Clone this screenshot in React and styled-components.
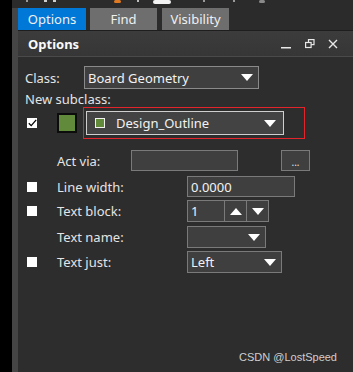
import React from "react";
import styled, { createGlobalStyle } from "styled-components";

const GlobalStyle = createGlobalStyle`
  html, body {
    margin: 0;
    padding: 0;
    background: #2d2d2d;
  }
  body {
    font-family: "Noto Sans", "Open Sans", sans-serif;
    font-size: 13px;
    color: #e6e6e6;
  }
`;

const Screen = styled.div`
  position: relative;
  display: flex;
  width: 353px;
  height: 372px;
  overflow: hidden;
`;

const LeftRail = styled.div`
  width: 12px;
  background: #000;
`;

const Main = styled.div`
  flex: 1;
  display: flex;
  flex-direction: column;
`;

const TopStrip = styled.div`
  height: 8px;
  background: #2b2b2b;
  display: flex;
  align-items: flex-start;
  gap: 6px;
  padding-left: 14px;
  overflow: hidden;
`;

const Blip = styled.span`
  display: block;
  margin-left: ${(p) => p.$ml || 0}px;
  width: ${(p) => p.$w}px;
  height: ${(p) => p.$h || 3}px;
  background: ${(p) => p.$c};
  border-radius: ${(p) => p.$r || 0}px;
`;

const Body = styled.div`
  flex: 1;
  display: flex;
`;

const Gutter = styled.div`
  width: 6px;
  background: #454545;
`;

const Panel = styled.div`
  flex: 1;
  display: flex;
  flex-direction: column;
  background: #2d2d2d;
`;

const TabBar = styled.div`
  display: flex;
  height: 22px;
  background: #2b2b2b;
  border-bottom: 1px solid #1e1e1e;
`;

const Tab = styled.div`
  width: ${(p) => p.$w}px;
  margin-right: ${(p) => p.$mr || 0}px;
  display: flex;
  align-items: center;
  justify-content: center;
  background: ${(p) => (p.$active ? "#0078d7" : "#6e6e6e")};
  color: #f0f0f0;
  font-size: 13px;
`;

const Header = styled.div`
  height: 25px;
  display: flex;
  align-items: center;
  padding: 0 15px 0 10px;
  background: linear-gradient(#3c3c3c, #363636);
  border-bottom: 1px solid #4a4a4a;
`;

const HeaderTitle = styled.div`
  flex: 1;
  font-weight: 700;
  font-size: 13px;
  color: #fafafa;
`;

const HeaderIcons = styled.div`
  display: flex;
  align-items: center;
  gap: 13px;
`;

const Form = styled.div`
  display: flex;
  flex-direction: column;
  padding: 9px 0 0 9px;
`;

const Row = styled.div`
  display: flex;
  align-items: center;
  height: ${(p) => p.$h}px;
  margin-top: ${(p) => p.$mt || 0}px;
`;

const CheckCell = styled.div`
  width: 30px;
  display: flex;
  align-items: center;
`;

const Check = styled.div`
  width: 10px;
  height: 10px;
  background: #fff;
  display: flex;
  align-items: center;
  justify-content: center;
`;

const Label = styled.div`
  width: ${(p) => p.$w}px;
  margin-left: ${(p) => p.$ml || 0}px;
  color: #e4e4e4;
  white-space: nowrap;
`;

const Field = styled.div`
  box-sizing: border-box;
  width: ${(p) => p.$w}px;
  height: ${(p) => p.$h || 22}px;
  display: flex;
  align-items: center;
  padding-left: 3px;
  background: ${(p) => p.$bg || "#3f3f3f"};
  border: 1px solid ${(p) => p.$border || "#7a7a7a"};
  color: #f2f2f2;
`;

const FieldText = styled.span`
  flex: 1;
  white-space: nowrap;
`;

const Arrow = styled.span`
  width: 0;
  height: 0;
  margin-right: ${(p) => p.$mr ?? 5}px;
  border-left: 6px solid transparent;
  border-right: 6px solid transparent;
  border-${(p) => (p.$up ? "bottom" : "top")}: 7px solid #fff;
`;

const SpinBtn = styled.div`
  width: 21px;
  align-self: stretch;
  display: flex;
  align-items: center;
  justify-content: center;
  border-left: 1px solid #7a7a7a;
`;

const Swatch = styled.div`
  box-sizing: border-box;
  width: 20px;
  height: 20px;
  background: #618a3b;
  border: 2px solid #0c0c0c;
`;

const Highlight = styled.div`
  box-sizing: border-box;
  width: 222px;
  height: 32px;
  margin-left: 6px;
  padding: 3px 0 0 2px;
  border: 1px solid #e3242b;
`;

const MiniSwatch = styled.span`
  box-sizing: border-box;
  width: 10px;
  height: 10px;
  margin: 0 11px 0 5px;
  background: #618a3b;
  border: 1px solid #f0f0f0;
`;

const DotsBtn = styled.div`
  box-sizing: border-box;
  width: 29px;
  height: 21px;
  margin-left: 43px;
  display: flex;
  align-items: flex-end;
  justify-content: center;
  padding-bottom: 3px;
  background: #3f3f3f;
  border: 1px solid #7a7a7a;
  font-size: 10px;
  line-height: 1;
  color: #e0e0e0;
`;

const Watermark = styled.div`
  position: absolute;
  right: 16px;
  bottom: 9px;
  font-family: "Liberation Sans", Arial, sans-serif;
  font-size: 11px;
  color: #cfcfcf;
`;

const Minimize = () => (
  <svg width="11" height="11" viewBox="0 0 11 11">
    <rect x="0" y="9" width="10" height="1.5" fill="#e8e8e8" />
  </svg>
);

const Restore = () => (
  <svg width="10" height="10" viewBox="0 0 10 10" fill="none" stroke="#e8e8e8" strokeWidth="1.2">
    <rect x="3.5" y="0.6" width="5.5" height="5" />
    <rect x="0.6" y="3.5" width="5.5" height="5" fill="#383838" />
  </svg>
);

const Close = () => (
  <svg width="10" height="10" viewBox="0 0 10 10" stroke="#e8e8e8" strokeWidth="1.4">
    <path d="M1 1 L9 9 M9 1 L1 9" />
  </svg>
);

const Tick = () => (
  <svg width="9" height="8" viewBox="0 0 9 8" fill="none" stroke="#000" strokeWidth="1.3">
    <path d="M0.8 4.2 L3.2 6.6 L8.2 0.8" />
  </svg>
);

export default function App() {
  return (
    <>
      <GlobalStyle />
      <Screen>
        <LeftRail />
        <Main>
          <TopStrip>
            <Blip $w={2} $h={2} $c="#9a9a9a" />
            <Blip $ml={10} $w={3} $h={2} $c="#cfcfcf" />
            <Blip $w={3} $h={2} $c="#cfcfcf" />
            <Blip $ml={52} $w={7} $h={3} $c="#e07a22" $r={3} />
            <Blip $ml={10} $w={2} $h={2} $c="#bdbdbd" />
            <Blip $ml={8} $w={18} $h={4} $c="#f2f2f2" $r={2} />
            <Blip $ml={26} $w={2} $h={2} $c="#9a9a9a" />
            <Blip $ml={22} $w={2} $h={2} $c="#9a9a9a" />
            <Blip $ml={18} $w={6} $h={3} $c="#8a8a8a" $r={3} />
          </TopStrip>
          <Body>
            <Gutter />
            <Panel>
              <TabBar>
                <Tab $w={68} $mr={4} $active>Options</Tab>
                <Tab $w={67} $mr={5}>Find</Tab>
                <Tab $w={67}>Visibility</Tab>
              </TabBar>
              <Header>
                <HeaderTitle>Options</HeaderTitle>
                <HeaderIcons>
                  <Minimize />
                  <Restore />
                  <Close />
                </HeaderIcons>
              </Header>
              <Form>
                <Row $h={23}>
                  <Label $w={59} $ml={-2}>Class:</Label>
                  <Field $w={175} $h={23} $border="#8a8a8a">
                    <FieldText>Board Geometry</FieldText>
                    <Arrow />
                  </Field>
                </Row>
                <Row $h={16} $mt={2}>
                  <Label $w={120} $ml={-2}>New subclass:</Label>
                </Row>
                <Row $h={32}>
                  <CheckCell>
                    <Check>
                      <Tick />
                    </Check>
                  </CheckCell>
                  <Swatch />
                  <Highlight>
                    <Field $w={198} $h={24} $border="#cfcfcf" $bg="#434343">
                      <MiniSwatch />
                      <FieldText>Design_Outline</FieldText>
                      <Arrow $mr={7} />
                    </Field>
                  </Highlight>
                </Row>
                <Row $h={21} $mt={11}>
                  <CheckCell />
                  <Label $w={74}>Act via:</Label>
                  <Field $w={107} $h={21} />
                  <DotsBtn>...</DotsBtn>
                </Row>
                <Row $h={21} $mt={5}>
                  <CheckCell>
                    <Check />
                  </CheckCell>
                  <Label $w={130}>Line width:</Label>
                  <Field $w={108} $h={21}>
                    <FieldText>0.0000</FieldText>
                  </Field>
                </Row>
                <Row $h={22} $mt={3}>
                  <CheckCell>
                    <Check />
                  </CheckCell>
                  <Label $w={130}>Text block:</Label>
                  <Field $w={82} $h={22}>
                    <FieldText>1</FieldText>
                    <SpinBtn>
                      <Arrow $up $mr={0} />
                    </SpinBtn>
                    <SpinBtn>
                      <Arrow $mr={0} />
                    </SpinBtn>
                  </Field>
                </Row>
                <Row $h={22} $mt={4}>
                  <CheckCell />
                  <Label $w={130}>Text name:</Label>
                  <Field $w={79} $h={22}>
                    <FieldText />
                    <Arrow />
                  </Field>
                </Row>
                <Row $h={22} $mt={3}>
                  <CheckCell>
                    <Check />
                  </CheckCell>
                  <Label $w={130}>Text just:</Label>
                  <Field $w={95} $h={22}>
                    <FieldText>Left</FieldText>
                    <Arrow />
                  </Field>
                </Row>
              </Form>
            </Panel>
          </Body>
        </Main>
        <Watermark>CSDN @LostSpeed</Watermark>
      </Screen>
    </>
  );
}
